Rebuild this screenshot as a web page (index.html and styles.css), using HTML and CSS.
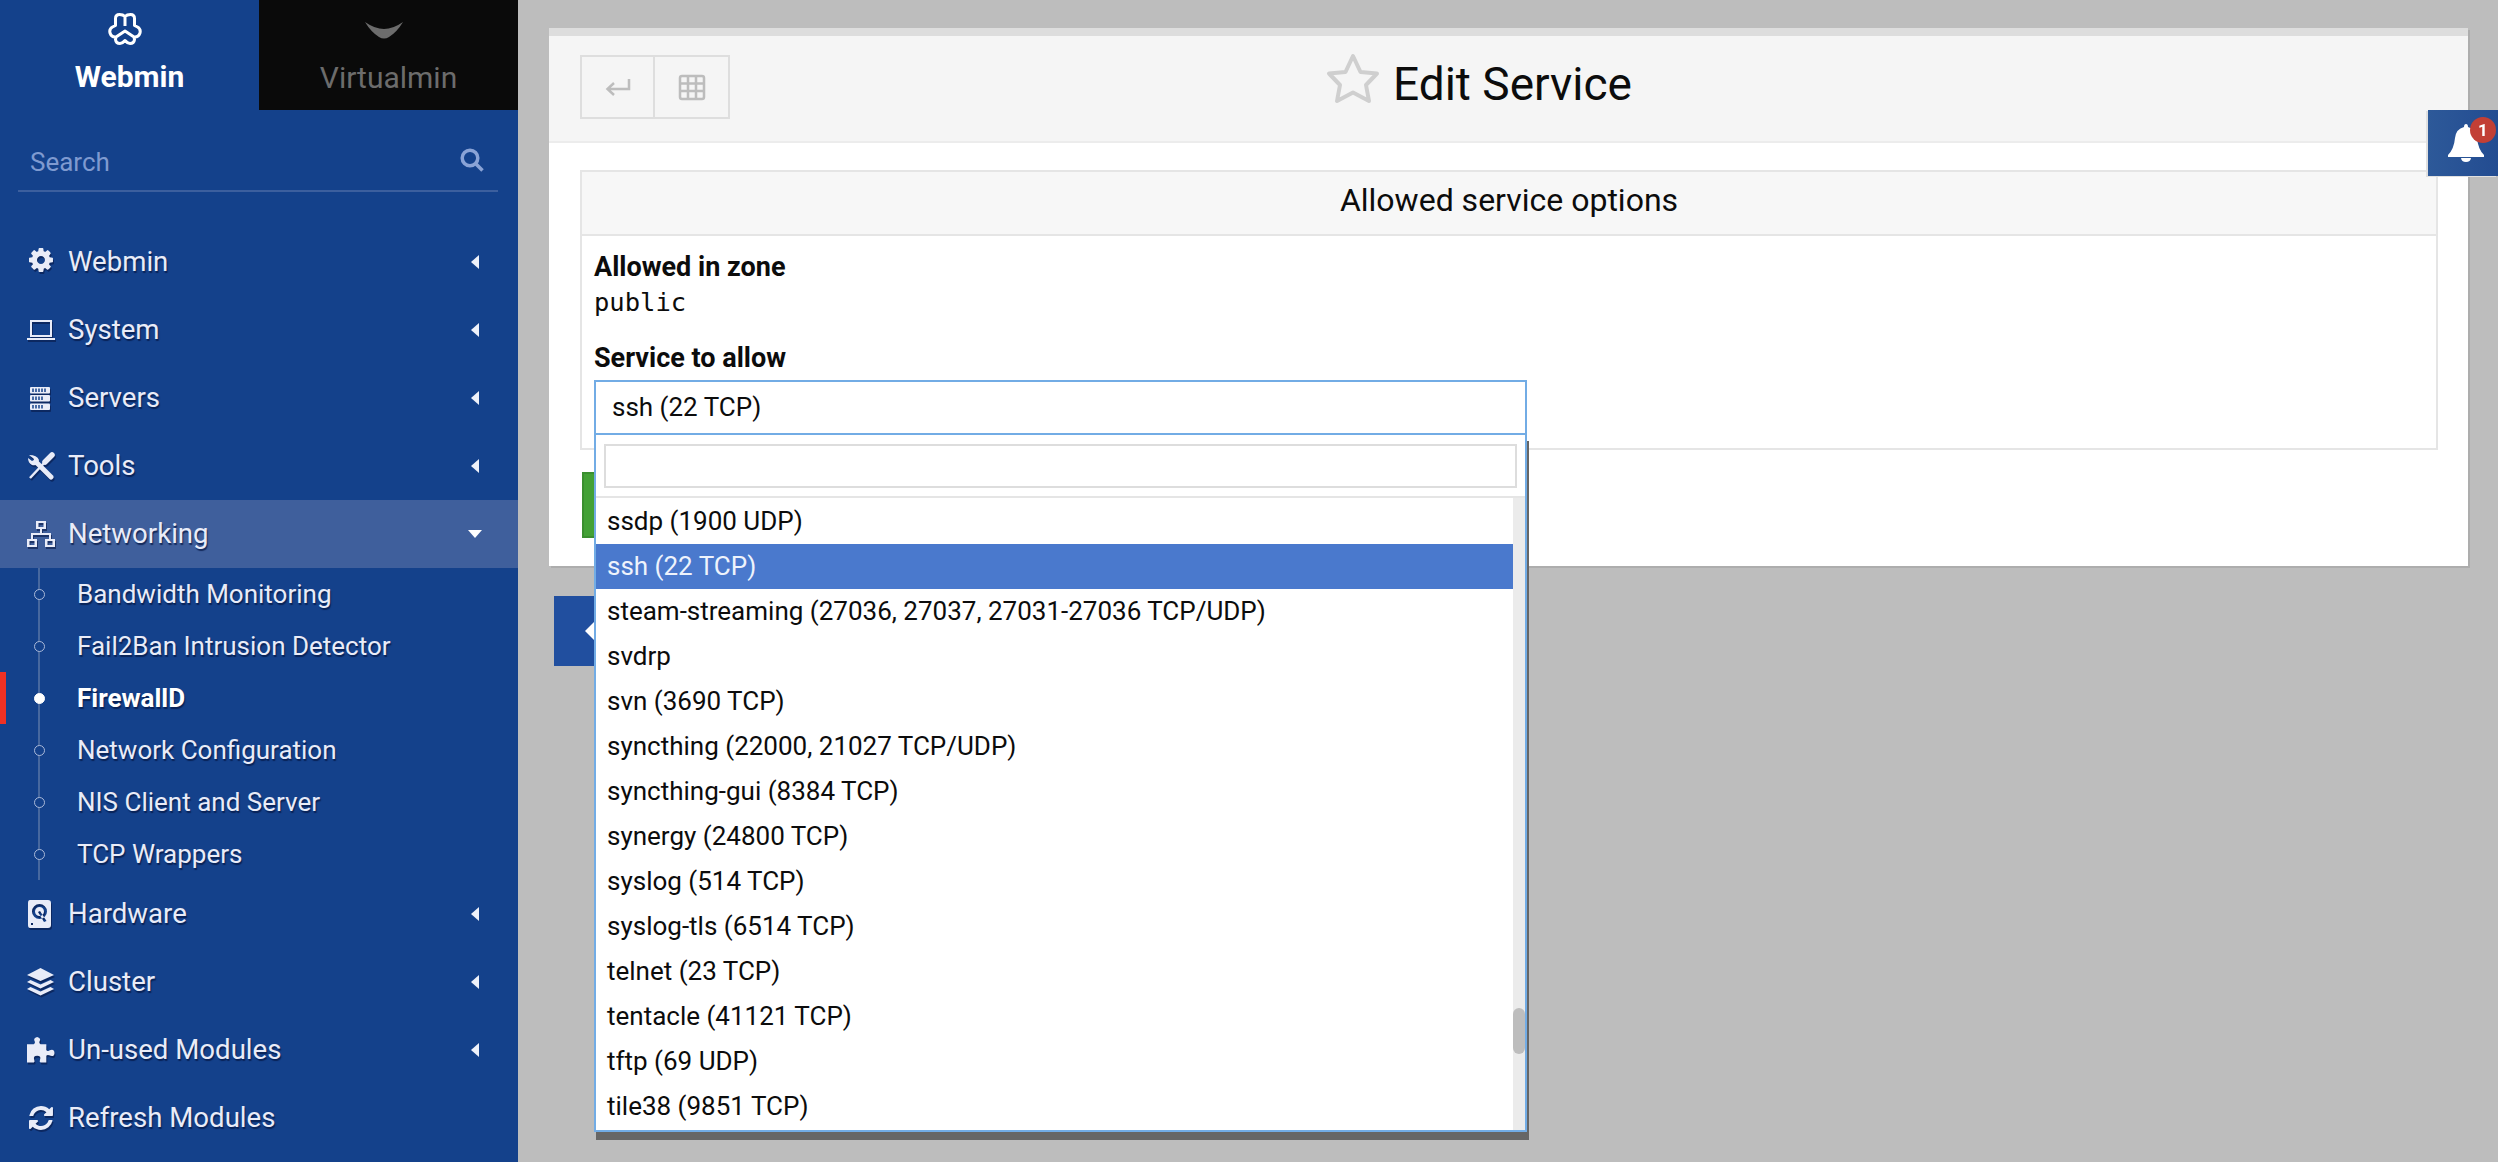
FILE: index.html
```html
<!DOCTYPE html>
<html lang="en">
<head>
<meta charset="utf-8">
<title>Edit Service</title>
<link rel="stylesheet" href="styles.css">
</head>
<body>
<aside class="sidebar">
  <div class="tabs">
    <div class="tab tab-webmin">
      <svg class="logo-webmin" viewBox="0 0 34 32"><path d="M7.500 12.500 V5.500 Q7.500 1.500 11.500 1.500 Q15 1.500 17 3.500 Q19 1.500 22.500 1.500 Q26.500 1.500 26.500 5.500 V12.500 L29.500 14 Q33 16 32 20 Q30.500 24.500 26 24 L26.500 26.500 Q26 30.500 22 30.500 Q19.500 30.500 17 27.500 Q14.500 30.500 12 30.500 Q8 30.500 7.500 26.500 L8 24 Q3.500 24.500 2 20 Q1 16 4.500 14Z M17 3.500 V13 M8 24 L17 18 L26 24"/></svg>
      <span>Webmin</span>
    </div>
    <div class="tab tab-virtualmin">
      <svg class="logo-virtualmin" viewBox="0 0 38 18"><path d="M0 0 Q10 7 19 7 Q28 7 38 0 Q32 10 24 15 Q19 18 14 15 Q6 10 0 0Z"/></svg>
      <span>Virtualmin</span>
    </div>
  </div>
  <div class="search">
    <span>Search</span>
    <svg class="search-icon" viewBox="0 0 24 24"><circle cx="10" cy="10" r="7.800"/><path d="M15.500 15.500 L22.500 22.500"/></svg>
  </div>
  <nav class="menu">
    <a class="item">
      <svg class="ico" viewBox="0 0 28 28"><path transform="translate(2 2) scale(.0156)" d="M1024 640q0-106-75-181t-181-75-181 75-75 181 75 181 181 75 181-75 75-181zm512-109v222q0 12-8 23t-20 13l-185 28q-19 54-39 91 35 50 107 138 10 12 10 25t-9 23q-27 37-99 108t-94 71q-12 0-26-9l-138-108q-44 23-91 38-16 136-29 186-7 28-36 28h-222q-14 0-24.500-8.500t-11.500-21.500l-28-184q-49-16-90-37l-141 107q-10 9-25 9-14 0-25-11-126-114-165-168-7-10-7-23 0-12 8-23 15-21 51-66.500t54-70.500q-27-50-41-99l-183-27q-13-2-21-12.500t-8-23.500v-222q0-12 8-23t19-13l186-28q14-46 39-92-40-57-107-138-10-12-10-24 0-10 9-23 26-36 98.500-107.500t94.500-71.500q13 0 26 10l138 107q44-23 91-38 16-136 29-186 7-28 36-28h222q14 0 24.500 8.500t11.500 21.500l28 184q49 16 90 37l142-107q9-9 24-9 13 0 25 10 129 119 165 170 7 8 7 22 0 12-8 23-15 21-51 66.500t-54 70.500q26 50 41 98l183 28q13 2 21 12.500t8 23.500z"/></svg>
      <span class="label">Webmin</span><i class="caret"></i>
    </a>
    <a class="item">
      <svg class="ico" viewBox="0 0 28 28"><path fill-rule="evenodd" d="M3 4 H25 V21 H3Z M5 6 V19 H23 V6Z M0 22 H28 V24 H0Z"/></svg>
      <span class="label">System</span><i class="caret"></i>
    </a>
    <a class="item">
      <svg class="ico" viewBox="0 0 28 28"><rect x="3" y="3" width="20" height="6.500" rx="1"/><rect x="3" y="11" width="20" height="6.500" rx="1"/><rect x="3" y="19.500" width="20" height="6.500" rx="1"/><path class="cut" d="M6 4.500 V8 M9 4.500 V8 M12 4.500 V8 M15 4.500 V8 M18 4.500 V8 M6 12.500 V16 M9 12.500 V16 M12 12.500 V16 M15 12.500 V16 M6 21 V24.500 M9 21 V24.500 M12 21 V24.500 M15 21 V24.500"/></svg>
      <span class="label">Servers</span><i class="caret"></i>
    </a>
    <a class="item">
      <svg class="ico" viewBox="0 0 28 28"><path class="tool-thin" d="M3 26 L18 10"/><path class="tool-handle" d="M18 10 L25 3"/><path class="tool-wrench" d="M9 10 L24 25"/><path d="M2 3 L6.500 6.500 L7 8 L5 9 L1 6 Q1 11 5 13 Q8 14 11 12 L12 8 Q10 3 2 3Z"/></svg>
      <span class="label">Tools</span><i class="caret"></i>
    </a>
    <a class="item item-open">
      <svg class="ico ico-net" viewBox="0 0 30 28"><path fill-rule="evenodd" d="M10 1 H20 V9 H10Z M12.500 3 V7 H17.500 V3Z M1 19 H11 V27 H1Z M3.500 21 V25 H8.500 V21Z M19 19 H29 V27 H19Z M21.500 21 V25 H26.500 V21Z M14 9 H16 V13 H25 V19 H23 V15 H7 V19 H5 V13 H14Z"/></svg>
      <span class="label">Networking</span><i class="caret-down"></i>
    </a>
    <ul class="sub">
      <li class="sub-item"><i class="dot"></i><span>Bandwidth Monitoring</span></li>
      <li class="sub-item"><i class="dot"></i><span>Fail2Ban Intrusion Detector</span></li>
      <li class="sub-item sub-active"><i class="dot"></i><span>FirewallD</span></li>
      <li class="sub-item"><i class="dot"></i><span>Network Configuration</span></li>
      <li class="sub-item"><i class="dot"></i><span>NIS Client and Server</span></li>
      <li class="sub-item"><i class="dot"></i><span>TCP Wrappers</span></li>
    </ul>
    <a class="item">
      <svg class="ico" viewBox="0 0 28 28"><path fill-rule="evenodd" d="M3 0 H21 Q24 0 24 3 V25 Q24 28 21 28 H3 Q1 28 1 25 V3 Q1 0 3 0Z M12.500 4 A7.500 7.500 0 1 0 12.500 19 A7.500 7.500 0 1 0 12.500 4Z M12.500 7 A4.500 4.500 0 1 1 12.500 16 A4.500 4.500 0 1 1 12.500 7Z M11 12 L17 22 L19.500 21 L13 11Z M4 23 H6 V25 H4Z"/></svg>
      <span class="label">Hardware</span><i class="caret"></i>
    </a>
    <a class="item">
      <svg class="ico" viewBox="0 0 28 28"><path d="M13.500 0 L27 7 L13.500 13 L0 7Z M3.500 12 L13.500 16.500 L23.500 12 L27 14 L13.500 20.500 L0 14Z M3.500 19 L13.500 23.500 L23.500 19 L27 21 L13.500 27.500 L0 21Z"/></svg>
      <span class="label">Cluster</span><i class="caret"></i>
    </a>
    <a class="item">
      <svg class="ico" viewBox="0 0 29 28"><path d="M0 8 H7 Q9 7 8 5 Q6 2 10.500 0.500 Q15 2 13 5 Q12 7 14 8 H20 V14 Q21 16 23 14.500 Q28 12 28.500 17 Q28 22 23 19.500 Q21 18.500 20 20 V27 H14 Q12.500 26 13.500 24 Q15 20 10.500 20 Q6 20 7.500 24 Q8.500 26 7 27 H0Z"/></svg>
      <span class="label">Un-used Modules</span><i class="caret"></i>
    </a>
    <a class="item">
      <svg class="ico" viewBox="0 0 28 28"><path transform="translate(2 2) scale(.0156)" d="M1511 928q0 5-1 7-64 268-268 434.500t-478 166.500q-146 0-282.500-55t-243.500-157l-129 129q-19 19-45 19t-45-19-19-45v-448q0-26 19-45t45-19h448q26 0 45 19t19 45-19 45l-137 137q71 66 161 102t187 36q134 0 250-65t186-179q11-17 53-117 8-23 30-23h192q13 0 22.500 9.500t9.500 22.500zm25-800v448q0 26-19 45t-45 19h-448q-26 0-45-19t-19-45 19-45l138-138q-148-137-349-137-134 0-250 65t-186 179q-11 17-53 117-8 23-30 23h-199q-13 0-22.500-9.500t-9.500-22.500v-7q65-268 270-434.500t480-166.500q146 0 284 55.500t245 156.500l130-129q19-19 45-19t45 19 19 45z"/></svg>
      <span class="label">Refresh Modules</span>
    </a>
  </nav>
</aside>

<main class="main">
  <section class="panel">
    <header class="panel-head">
      <div class="btn-group">
        <button class="tool-btn" type="button"><svg class="tool-ico" viewBox="0 0 28 28"><path d="M25 6 V16 H4 M10 10 L3.500 16 L10 22"/></svg></button>
        <button class="tool-btn" type="button"><svg class="tool-ico" viewBox="0 0 28 28"><rect x="2" y="3" width="24" height="23" rx="2"/><path d="M2 10.500 H26 M2 18 H26 M10 3 V26 M18 3 V26"/></svg></button>
      </div>
      <div class="title">
        <svg class="star" viewBox="0 0 54 52"><path d="M27 3 L34.500 19 L51 20.500 L40 32 L43 48 L27 39.500 L11 48 L14 32 L3 20.500 L19.500 19Z"/></svg>
        <h1>Edit Service</h1>
      </div>
    </header>
    <div class="panel-body">
      <div class="options">
        <div class="options-head">Allowed service options</div>
        <div class="options-body">
          <div class="field-label">Allowed in zone</div>
          <div class="mono">public</div>
          <div class="field-label field-second">Service to allow</div>
          <div class="select-wrap">
            <div class="select">ssh (22 TCP)</div>
            <div class="dropdown">
              <div class="dd-search"><div class="dd-input"></div></div>
              <div class="dd-results">
                <ul class="dd-list">
                  <li>ssdp (1900 UDP)</li>
                  <li class="selected">ssh (22 TCP)</li>
                  <li>steam-streaming (27036, 27037, 27031-27036 TCP/UDP)</li>
                  <li>svdrp</li>
                  <li>svn (3690 TCP)</li>
                  <li>syncthing (22000, 21027 TCP/UDP)</li>
                  <li>syncthing-gui (8384 TCP)</li>
                  <li>synergy (24800 TCP)</li>
                  <li>syslog (514 TCP)</li>
                  <li>syslog-tls (6514 TCP)</li>
                  <li>telnet (23 TCP)</li>
                  <li>tentacle (41121 TCP)</li>
                  <li>tftp (69 UDP)</li>
                  <li>tile38 (9851 TCP)</li>
                </ul>
                <div class="dd-track"><div class="dd-thumb"></div></div>
              </div>
            </div>
          </div>
        </div>
      </div>
      <div class="save-btn"></div>
    </div>
  </section>
  <div class="return-btn"><i class="return-caret"></i></div>
</main>

<div class="bell">
  <svg class="bell-ico" viewBox="0 0 36 38"><path d="M18 0 Q20 0 20 3 Q28 5 29 14 Q30 25 36 31 V33 H0 V31 Q6 25 7 14 Q8 5 16 3 Q16 0 18 0Z M13 34 H23 Q22.500 38 18 38 Q13.500 38 13 34Z"/></svg>
  <span class="badge">1</span>
</div>
</body>
</html>
```

FILE: styles.css
```css
* { box-sizing: border-box; }
html, body { height: 100%; }
body {
  margin: 0;
  display: flex;
  overflow: hidden;
  background: #bdbdbd;
  font-family: Roboto, "Liberation Sans", sans-serif;
  color: #0c0c0c;
}

/* sidebar */
.sidebar {
  flex: 0 0 518px;
  height: 1162px;
  background: #14418b;
  color: #e9ecf8;
}
.tabs { display: flex; height: 110px; }
.tab {
  flex: 1 1 0;
  display: flex;
  flex-direction: column;
  align-items: center;
  font-size: 30px;
  line-height: 34px;
}
.tab-webmin { font-weight: 700; color: #fff; padding-top: 13px; }
.tab-virtualmin { background: #0a0a0a; color: #6c6c6c; padding-top: 22px; }
.logo-webmin { width: 34px; height: 32px; margin: 0 10px 15px 0; fill: none; stroke: #fff; stroke-width: 3; stroke-linejoin: round; }
.logo-virtualmin { width: 38px; height: 18px; margin: 0 10px 21px 0; fill: #6c6c6c; }
.search {
  display: flex;
  align-items: center;
  justify-content: space-between;
  height: 82px;
  margin: 0 20px 0 18px;
  padding: 24px 14px 0 12px;
  border-bottom: 2px solid #3c5f9e;
  font-size: 26px;
  color: #7f9ad0;
}
.search-icon { width: 24px; height: 24px; fill: none; stroke: #8aa3d6; stroke-width: 3.500; margin-top: -4px; }
.menu { display: block; padding-top: 36px; }
.item {
  display: flex;
  align-items: center;
  height: 68px;
  padding: 0 36px 0 27px;
  font-size: 27.600px;
  text-shadow: 1px 2px 1px rgba(6, 24, 70, .75);
}
.item-open { background: #3f5f9c; }
.ico { flex: 0 0 28px; width: 28px; height: 28px; margin-right: 13px; fill: #e9ecf8; filter: drop-shadow(1px 2px 0 rgba(6, 24, 70, .6)); }
.ico-net { flex-basis: 30px; width: 30px; margin: 0 12px 0 -1px; }
.cut { fill: none; stroke: #14418b; stroke-width: 1.500; }
.tool-thin { fill: none; stroke: #e9ecf8; stroke-width: 2.500; }
.tool-handle { fill: none; stroke: #e9ecf8; stroke-width: 5.500; stroke-linecap: round; }
.tool-wrench { fill: none; stroke: #e9ecf8; stroke-width: 5; stroke-linecap: round; }
.label { flex: 1; padding-bottom: 2px; }
.caret {
  width: 0; height: 0;
  border-top: 7px solid transparent;
  border-bottom: 7px solid transparent;
  border-right: 8px solid #eef1fa;
  margin-right: 3px;
}
.caret-down {
  width: 0; height: 0;
  border-left: 7px solid transparent;
  border-right: 7px solid transparent;
  border-top: 8px solid #fff;
}
.sub {
  list-style: none;
  margin: 0;
  padding: 0;
  background: linear-gradient(#47689f, #47689f) 38px 0 / 2px 100% no-repeat;
}
.sub-item {
  position: relative;
  display: flex;
  align-items: center;
  height: 52px;
  padding-left: 34px;
  font-size: 26px;
  text-shadow: 1px 2px 1px rgba(6, 24, 70, .75);
}
.dot {
  flex: none;
  width: 11px;
  height: 11px;
  margin-right: 32px;
  border: 1.500px solid #aab9d9;
  border-radius: 50%;
  background: #14418b;
}
.sub-active { color: #fff; font-weight: 700; }
.sub-active::before {
  content: "";
  position: absolute;
  left: 0; top: 0;
  width: 6px; height: 52px;
  background: #ef3124;
}
.sub-active .dot { background: #fff; border-color: #fff; }

/* main */
.main { flex: 1; padding: 28px 28px 0 31px; }
.panel {
  background: #fff;
  border-top: 8px solid #ddd;
  box-shadow: 2px 2px 0 #adadad;
  width: 1919px;
  height: 538px;
}
.panel-head {
  position: relative;
  display: flex;
  align-items: center;
  justify-content: center;
  height: 107px;
  padding: 0 59px 9px 0;
  background: #f5f5f5;
  border-bottom: 2px solid #ececec;
}
.btn-group {
  position: absolute;
  left: 31px;
  top: 19px;
  display: flex;
  height: 64px;
  border: 2px solid #dedede;
}
.tool-btn {
  width: 73px;
  padding: 0;
  background: none;
  border: 0;
  border-right: 2px solid #dedede;
  display: flex;
  align-items: center;
  justify-content: center;
}
.tool-btn:last-child { border-right: 0; }
.tool-ico { width: 28px; height: 28px; fill: none; stroke: #bdbdbd; stroke-width: 2.500; }
.title { display: flex; align-items: center; gap: 13px; }
.star { width: 54px; height: 52px; fill: none; stroke: #cfcfcf; stroke-width: 4; stroke-linejoin: round; margin-top: -10px; }
h1 { margin: 0; font-size: 46px; font-weight: 400; line-height: 60px; }
.panel-body { padding: 27px 30px 0 31px; }
.options { height: 280px; border: 2px solid #e5e5e5; }
.options-head {
  height: 64px;
  line-height: 56px;
  text-align: center;
  background: #f7f7f7;
  border-bottom: 2px solid #e5e5e5;
  font-size: 32px;
}
.options-body { padding: 15px 12px 0; }
.field-label { font-size: 27px; font-weight: 700; line-height: 32px; }
.field-second { margin-top: 21px; }
.mono { font-family: "DejaVu Sans Mono", monospace; font-size: 25.500px; line-height: 38px; }
.select-wrap { position: relative; width: 933px; margin-top: 6px; }
.select {
  height: 55px;
  padding-left: 16px;
  line-height: 50px;
  background: #fff;
  border: 2px solid #72ace5;
  font-size: 26px;
}
.dropdown {
  position: absolute;
  z-index: 2;
  left: 0;
  right: 0;
  top: 53px;
  height: 699px;
  background: #fff;
  border: 2px solid #72ace5;
  box-shadow: 2px 8px 0 #666;
}
.dd-search {
  height: 63px;
  padding: 9px 8px 0;
  border-bottom: 2px solid #e5e5e5;
}
.dd-input { height: 44px; border: 2px solid #ddd; }
.dd-results { display: flex; height: 632px; overflow: hidden; }
.dd-list { flex: 1; list-style: none; margin: 0; padding: 1px 0 0; font-size: 26px; }
.dd-list li { height: 45px; padding-left: 11px; line-height: 45px; white-space: nowrap; }
.dd-list .selected { background: #4a79cd; color: #eef3fc; }
.dd-track { flex: 0 0 12px; background: #ebebeb; padding-top: 510px; }
.dd-thumb { height: 46px; border-radius: 6px; background: #bdbdbd; }
.save-btn {
  width: 161px;
  height: 66px;
  margin: 22px 0 0 2px;
  background: #43a136;
  border: 2px solid #3a8f2f;
}
.return-btn {
  display: flex;
  align-items: center;
  width: 90px;
  height: 70px;
  margin: 30px 0 0 5px;
  padding-left: 31px;
  background: #214f9f;
}
.return-caret {
  width: 0; height: 0;
  border-top: 12px solid transparent;
  border-bottom: 12px solid transparent;
  border-right: 12px solid #fff;
}

/* notification bell */
.bell {
  position: fixed;
  right: 0;
  top: 110px;
  width: 70px;
  height: 66px;
  background: linear-gradient(90deg, #2d5999, #234c91);
  box-shadow: -2px 1px 0 #e0e0e0;
}
.bell-ico { position: absolute; left: 20px; top: 14px; width: 36px; height: 38px; fill: #fff; }
.badge {
  position: absolute;
  left: 42px;
  top: 7px;
  width: 26px;
  height: 26px;
  border-radius: 50%;
  background: #c23f35;
  color: #fff;
  font-size: 17px;
  font-weight: 700;
  line-height: 26px;
  text-align: center;
}
```
